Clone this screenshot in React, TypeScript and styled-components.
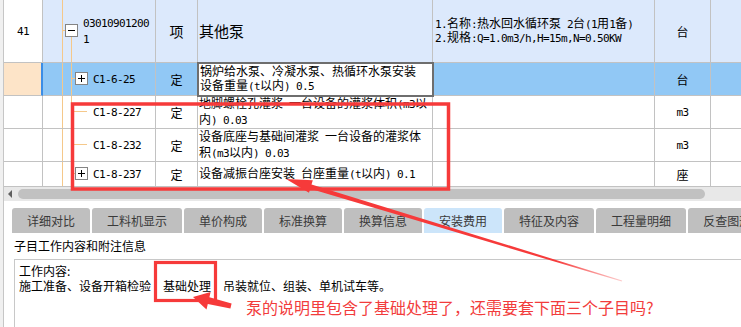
import React from 'react';
import styled, { createGlobalStyle } from 'styled-components';

const GlobalStyle = createGlobalStyle`
  html, body { margin: 0; padding: 0; }
  body {
    width: 741px; height: 327px; overflow: hidden; background: #fff;
    font-family: "Noto Sans CJK SC", "Noto Sans", sans-serif;
  }
  * { box-sizing: border-box; }
`;

const CJK = `"Noto Sans CJK SC", "Noto Sans", sans-serif`;
const COLS = '39px 113px 42px 235px 222px 56px 1fr';
const LINE = '#c2c2c2';
const TREE = '#f5c88a';
const RED = '#f63a3a';

const Page = styled.div`
  position: relative;
  width: 741px;
  height: 327px;
  overflow: hidden;
  background: #f0f0f0;
  padding-left: 3px;
  font-family: ${CJK};
`;

const Frame = styled.div`
  height: 100%;
  background: #fff;
  border-left: 1px solid #c6c6c6;
  display: flex;
  flex-direction: column;
`;

const Grid = styled.div`
  display: flex;
  flex-direction: column;
`;

const Row = styled.div<{ $h: number; $bg: string }>`
  display: grid;
  grid-template-columns: ${COLS};
  height: ${p => p.$h}px;
  background: ${p => p.$bg};
`;

const Cell = styled.div`
  border-right: 1px solid ${LINE};
  border-bottom: 1px solid ${LINE};
  min-width: 0;
  overflow: hidden;
  font-size: 12px;
  color: #000;
`;

const NumCell = styled(Cell)<{ $bg: string; $marker?: boolean }>`
  background: ${p => p.$bg};
  display: flex;
  align-items: center;
  justify-content: center;
  ${p => (p.$marker ? 'border-right: 2px solid #3b8de6;' : '')}
`;

const CodeCell = styled(Cell)`
  display: flex;
  align-items: stretch;
`;

const TreeSvg = styled.svg`
  flex: none;
  display: block;
`;

const CodeText = styled.div`
  display: flex;
  flex-direction: column;
  justify-content: center;
`;

const CenterCell = styled(Cell)<{ $size?: number }>`
  display: flex;
  align-items: center;
  justify-content: center;
  font-size: ${p => p.$size ?? 12}px;
`;

const NameCell = styled(Cell)<{ $editing?: boolean; $size?: number }>`
  display: flex;
  flex-direction: column;
  justify-content: center;
  padding-left: 1px;
  font-size: ${p => p.$size ?? 12}px;
  ${p =>
    p.$editing
      ? `background: #fff; outline: 2px solid #6e6e6e; outline-offset: -1px; padding-left: 2px; position: relative; z-index: 1;`
      : ''}
`;

const FeatCell = styled(Cell)`
  display: flex;
  flex-direction: column;
  justify-content: center;
  padding-left: 2px;
`;

const LastCell = styled(Cell)`
  border-right: none;
`;

const TextLine = styled.div<{ $lh?: number }>`
  white-space: pre;
  line-height: ${p => p.$lh ?? 14}px;
`;

const Latin = styled.span`
  font-family: "DejaVu Sans Mono", "Liberation Mono", monospace;
  font-size: 11px;
  letter-spacing: -0.62px;
`;

const ScrollBar = styled.div`
  height: 14px;
  flex: none;
  background: #e8e8e8;
  display: flex;
  align-items: center;
`;

const ScrollArrow = styled.div`
  width: 0;
  height: 0;
  margin-left: 4px;
  border-top: 4px solid transparent;
  border-bottom: 4px solid transparent;
  border-right: 4px solid #606060;
`;

const ScrollThumb = styled.div`
  width: 687px;
  height: 10px;
  margin-left: 6px;
  border-radius: 5px;
  background: #c1c1c1;
`;

const Bottom = styled.div`
  flex: 1;
  display: flex;
  flex-direction: column;
  padding-top: 7px;
  min-height: 0;
`;

const TabBar = styled.div`
  display: flex;
  gap: 2px;
  padding-left: 8px;
  overflow: hidden;
  flex: none;
`;

const Tab = styled.div<{ $active?: boolean }>`
  flex: none;
  height: 25px;
  line-height: 25px;
  padding: 0 15px;
  font-size: 12px;
  color: #3a3a3a;
  white-space: nowrap;
  border-radius: 3px 3px 0 0;
  background: ${p => (p.$active ? '#cce5fa' : '#bfbfbf')};
`;

const Title = styled.div`
  height: 26px;
  line-height: 26px;
  padding-left: 10px;
  font-size: 12px;
  color: #000;
  flex: none;
`;

const InfoBox = styled.div`
  position: relative;
  flex: 1;
  margin-left: 10px;
  border-top: 1px solid #c8c8c8;
  border-left: 1px solid #c8c8c8;
  padding: 3px 4px;
  font-size: 12px;
  color: #000;
`;

const InfoLine = styled.div`
  white-space: pre;
  line-height: 15px;
`;

const Note = styled.div`
  position: absolute;
  left: 231px;
  top: 37px;
  font-size: 16px;
  line-height: 20px;
  color: #f23c3c;
  white-space: nowrap;
`;

const Overlay = styled.svg`
  position: absolute;
  left: 0;
  top: 0;
  width: 741px;
  height: 327px;
  pointer-events: none;
  z-index: 10;
`;

function mixed(text: string) {
  return text
    .split(/([\x20-\x7E]+)/)
    .filter(Boolean)
    .map((part, i) =>
      /^[\x20-\x7E]+$/.test(part) ? (
        <Latin key={i}>{part}</Latin>
      ) : (
        <React.Fragment key={i}>{part}</React.Fragment>
      )
    );
}

type TreeKind = 'root' | 'box' | 'leaf';

function Tree({ kind, h, last }: { kind: TreeKind; h: number; last?: boolean }) {
  if (kind === 'root') {
    return (
      <TreeSvg width={40} height={h}>
        <line x1={19.5} y1={0} x2={19.5} y2={h} stroke={TREE} />
        <line x1={19.5} y1={30.5} x2={22.5} y2={30.5} stroke={TREE} />
        <line x1={28.5} y1={36.5} x2={28.5} y2={h} stroke={TREE} />
        <rect x={22.5} y={24.5} width={12} height={12} fill="#fff" stroke="#848484" />
        <line x1={25} y1={30.5} x2={32} y2={30.5} stroke="#000" />
      </TreeSvg>
    );
  }
  const mid = Math.round(h / 2) - 0.5;
  return (
    <TreeSvg width={50} height={h}>
      <line x1={19.5} y1={0} x2={19.5} y2={h} stroke={TREE} />
      <line x1={28.5} y1={0} x2={28.5} y2={last ? mid : h} stroke={TREE} />
      {kind === 'box' ? (
        <>
          <line x1={28.5} y1={mid} x2={32.5} y2={mid} stroke={TREE} />
          <rect x={32.5} y={mid - 6} width={12} height={12} fill="#fff" stroke="#848484" />
          <line x1={35} y1={mid} x2={42} y2={mid} stroke="#000" />
          <line x1={38.5} y1={mid - 3.5} x2={38.5} y2={mid + 3.5} stroke="#000" />
        </>
      ) : (
        <line x1={28.5} y1={mid} x2={44} y2={mid} stroke={TREE} />
      )}
    </TreeSvg>
  );
}

type RowData = {
  h: number;
  kind: TreeKind;
  bg: string;
  numBg: string;
  num?: string;
  marker?: boolean;
  last?: boolean;
  code: string[];
  type: string;
  typeSize?: number;
  name: string[];
  nameSize?: number;
  editing?: boolean;
  feat?: string[];
  unit: string;
};

const rows: RowData[] = [
  {
    h: 63,
    kind: 'root',
    bg: '#dce9fc',
    numBg: '#fff',
    num: '41',
    code: ['03010901200', '1'],
    type: '项',
    typeSize: 14,
    name: ['其他泵'],
    nameSize: 15,
    feat: ['1.名称:热水回水循环泵 2台(1用1备)', '2.规格:Q=1.0m3/h,H=15m,N=0.50KW'],
    unit: '台',
  },
  {
    h: 33,
    kind: 'box',
    bg: '#91c8f5',
    numBg: '#fde4c8',
    marker: true,
    code: ['C1-6-25'],
    type: '定',
    name: ['锅炉给水泵、冷凝水泵、热循环水泵安装', '设备重量(t以内) 0.5'],
    editing: true,
    unit: '台',
  },
  {
    h: 33,
    kind: 'leaf',
    bg: '#fff',
    numBg: '#fff',
    code: ['C1-8-227'],
    type: '定',
    name: ['地脚螺栓孔灌浆 一台设备的灌浆体积(m3以', '内) 0.03'],
    unit: 'm3',
  },
  {
    h: 33,
    kind: 'leaf',
    bg: '#fff',
    numBg: '#fff',
    code: ['C1-8-232'],
    type: '定',
    name: ['设备底座与基础间灌浆 一台设备的灌浆体', '积(m3以内) 0.03'],
    unit: 'm3',
  },
  {
    h: 25,
    kind: 'box',
    bg: '#fff',
    numBg: '#fff',
    last: true,
    code: ['C1-8-237'],
    type: '定',
    name: ['设备减振台座安装 台座重量(t以内) 0.1'],
    unit: '座',
  },
];

const tabs = ['详细对比', '工料机显示', '单价构成', '标准换算', '换算信息', '安装费用', '特征及内容', '工程量明细', '反查图形工程量'];

type Pt = [number, number];

function arrowPoints(tip: Pt, tail: Pt, headLen: number, headHalf: number, shaftHead: number, shaftTail: number) {
  const dx = tail[0] - tip[0];
  const dy = tail[1] - tip[1];
  const len = Math.hypot(dx, dy);
  const ux = dx / len;
  const uy = dy / len;
  const nx = -uy;
  const ny = ux;
  const bx = tip[0] + ux * headLen;
  const by = tip[1] + uy * headLen;
  const pts: Pt[] = [
    tip,
    [bx + nx * headHalf, by + ny * headHalf],
    [bx + nx * shaftHead, by + ny * shaftHead],
    [tail[0] + nx * shaftTail, tail[1] + ny * shaftTail],
    [tail[0] - nx * shaftTail, tail[1] - ny * shaftTail],
    [bx - nx * shaftHead, by - ny * shaftHead],
    [bx - nx * headHalf, by - ny * headHalf],
  ];
  return pts.map(p => `${p[0].toFixed(1)},${p[1].toFixed(1)}`).join(' ');
}

function Annotations() {
  return (
    <Overlay viewBox="0 0 741 327">
      <defs>
        <linearGradient id="fade" gradientUnits="userSpaceOnUse" x1={286} y1={179} x2={622} y2={281}>
          <stop offset="0" stopColor={RED} stopOpacity={1} />
          <stop offset="0.8" stopColor={RED} stopOpacity={1} />
          <stop offset="1" stopColor={RED} stopOpacity={0.25} />
        </linearGradient>
      </defs>
      <rect x={72.5} y={104} width={376} height={85} fill="none" stroke={RED} strokeWidth={3.5} />
      <rect x={155.5} y={262.5} width={60} height={38} fill="none" stroke={RED} strokeWidth={3.2} />
      <polygon points={arrowPoints([286, 179], [622, 281], 26, 6.5, 2.3, 0.6)} fill="url(#fade)" />
      <polygon points={arrowPoints([193, 297], [231, 306], 16, 9, 3.5, 2.5)} fill={RED} />
    </Overlay>
  );
}

export default function App() {
  return (
    <>
      <GlobalStyle />
      <Page>
        <Frame>
          <Grid>
            {rows.map((r, i) => (
              <Row key={i} $h={r.h} $bg={r.bg}>
                <NumCell $bg={r.numBg} $marker={r.marker}>
                  {r.num ? <Latin>{r.num}</Latin> : null}
                </NumCell>
                <CodeCell>
                  <Tree kind={r.kind} h={r.h - 1} last={r.last} />
                  <CodeText>
                    {r.code.map((c, j) => (
                      <TextLine key={j}>
                        <Latin>{c}</Latin>
                      </TextLine>
                    ))}
                  </CodeText>
                </CodeCell>
                <CenterCell $size={r.typeSize}>{r.type}</CenterCell>
                <NameCell $editing={r.editing} $size={r.nameSize}>
                  {r.name.map((n, j) => (
                    <TextLine key={j}>{mixed(n)}</TextLine>
                  ))}
                </NameCell>
                <FeatCell>
                  {(r.feat ?? []).map((f, j) => (
                    <TextLine key={j} $lh={12}>{mixed(f)}</TextLine>
                  ))}
                </FeatCell>
                <CenterCell>{mixed(r.unit)}</CenterCell>
                <LastCell />
              </Row>
            ))}
          </Grid>
          <ScrollBar>
            <ScrollArrow />
            <ScrollThumb />
          </ScrollBar>
          <Bottom>
            <TabBar>
              {tabs.map(t => (
                <Tab key={t} $active={t === '安装费用'}>
                  {t}
                </Tab>
              ))}
            </TabBar>
            <Title>子目工作内容和附注信息</Title>
            <InfoBox>
              <InfoLine>工作内容:</InfoLine>
              <InfoLine>施工准备、设备开箱检验　基础处理　吊装就位、组装、单机试车等。</InfoLine>
              <Note>泵的说明里包含了基础处理了，还需要套下面三个子目吗?</Note>
            </InfoBox>
          </Bottom>
        </Frame>
        <Annotations />
      </Page>
    </>
  );
}
